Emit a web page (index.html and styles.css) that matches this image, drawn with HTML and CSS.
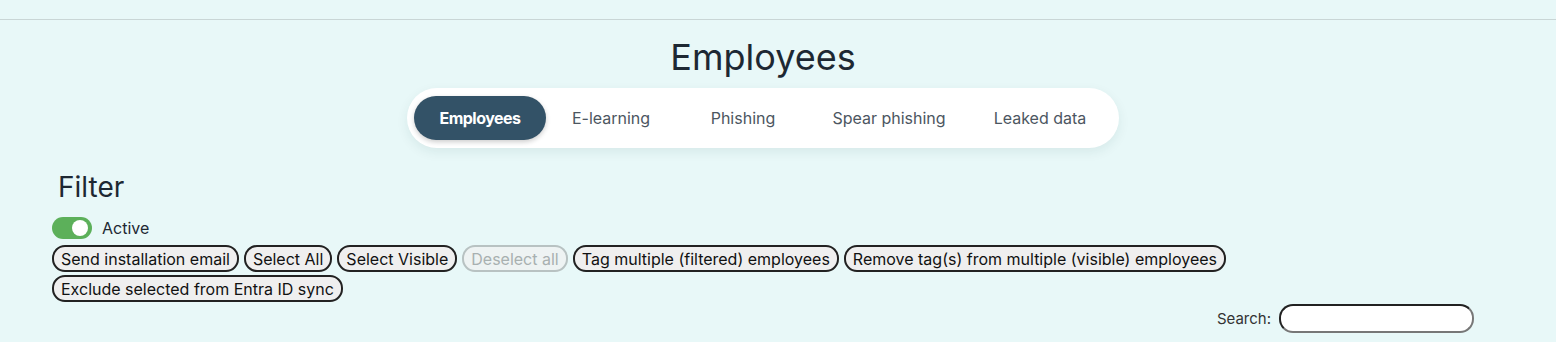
FILE: index.html
```html
<!DOCTYPE html>
<html lang="en">
<head>
  <meta charset="UTF-8" />
  <title>Employees</title>
  <link rel="stylesheet" href="styles.css">
</head>
<body>
  <div class="topbar"></div>

  <main class="page">
    <h1 class="page-title">Employees</h1>

    <nav class="tabs">
      <a class="tab active" href="#">Employees</a>
      <a class="tab" href="#">E-learning</a>
      <a class="tab" href="#">Phishing</a>
      <a class="tab" href="#">Spear phishing</a>
      <a class="tab" href="#">Leaked data</a>
    </nav>

    <section class="filter">
      <h2>Filter</h2>
      <label class="switch-row">
        <span class="switch on"><span class="knob"></span></span>
        <span>Active</span>
      </label>

      <div class="actions">
        <button>Send installation email</button>
        <button>Select All</button>
        <button>Select Visible</button>
        <button disabled>Deselect all</button>
        <button>Tag multiple (filtered) employees</button>
        <button>Remove tag(s) from multiple (visible) employees</button>
        <button>Exclude selected from Entra ID sync</button>
      </div>

      <div class="search">
        <label for="q">Search:</label>
        <input id="q" type="text">
      </div>
    </section>
  </main>
</body>
</html>
```

FILE: styles.css
```css
* {
  box-sizing: border-box;
}

html, body {
  margin: 0;
  padding: 0;
  background-color: #e8f8f8;
  font-family: 'Inter', 'Noto Sans', sans-serif;
  color: #1d2833;
}

.topbar {
  height: 20px;
  border-bottom: 1px solid #c9d6d6;
}

.page {
  padding: 0 82px 0 52px;
}

.page-title {
  margin: 15px 0 0;
  text-align: center;
  font-size: 36px;
  font-weight: 400;
  line-height: 44px;
}

.tabs {
  display: flex;
  width: 712px;
  height: 60px;
  margin: 9px auto 0;
  padding: 8px 7px;
  background-color: white;
  border-radius: 30px;
  box-shadow: 0 4px 12px rgba(0, 60, 70, 0.08);
}

.tab {
  display: flex;
  align-items: center;
  justify-content: center;
  color: #4c5661;
  text-decoration: none;
  font-size: 16px;
}

.tab:nth-child(1) { width: 132px; }
.tab:nth-child(2) { width: 130px; }
.tab:nth-child(3) { width: 134px; }
.tab:nth-child(4) { width: 158px; }
.tab:nth-child(5) { width: 144px; }

.tab.active {
  background-color: #335267;
  color: white;
  font-weight: 700;
  border-radius: 22px;
  box-shadow: 0 2px 5px rgba(0, 0, 0, 0.2);
  letter-spacing: -0.5px;
}

.filter h2 {
  margin: 22px 0 0 6px;
  font-size: 28px;
  font-weight: 400;
  line-height: 34px;
}

.switch-row {
  display: flex;
  align-items: center;
  gap: 10px;
  margin-top: 13px;
  font-size: 16px;
}

.switch {
  position: relative;
  width: 40px;
  height: 22px;
  border-radius: 11px;
  background-color: #5cb05a;
}

.switch .knob {
  position: absolute;
  top: 3px;
  right: 4px;
  width: 16px;
  height: 16px;
  border-radius: 50%;
  background-color: white;
}

.actions {
  display: flex;
  flex-wrap: wrap;
  gap: 3px 5px;
  margin-top: 6px;
}

.actions button {
  height: 27px;
  padding: 0 7px;
  font-family: inherit;
  font-size: 16px;
  color: #111;
  background-color: #efefef;
  border: 2px solid #222;
  border-radius: 13px;
}

.actions button:disabled {
  color: #a8b0b0;
  border-color: #b8c2c2;
  background-color: #eef3f3;
}

.search {
  display: flex;
  justify-content: flex-end;
  align-items: center;
  gap: 8px;
  margin-top: 2px;
  font-size: 15px;
  color: #333;
}

.search input {
  width: 195px;
  height: 29px;
  border: 2px solid #333;
  border-color: #222 #777 #777 #222;
  border-radius: 14px;
  background-color: white;
}
```
